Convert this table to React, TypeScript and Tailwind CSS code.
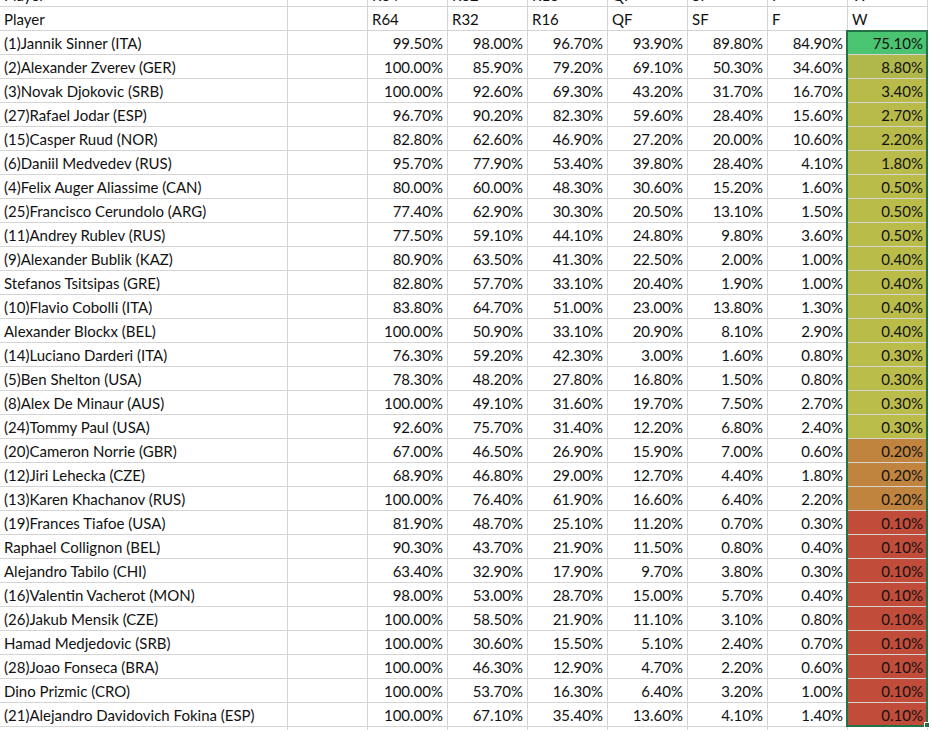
import React from "react";

type Row = [string, string[], string];

const data: Row[] = [
  ["(1)Jannik Sinner (ITA)", ["99.50%", "98.00%", "96.70%", "93.90%", "89.80%", "84.90%", "75.10%"], "bg-[#4bc472] border-[#4bc472]"],
  ["(2)Alexander Zverev (GER)", ["100.00%", "85.90%", "79.20%", "69.10%", "50.30%", "34.60%", "8.80%"], "bg-[#b0b84b] border-[#b0b84b]"],
  ["(3)Novak Djokovic (SRB)", ["100.00%", "92.60%", "69.30%", "43.20%", "31.70%", "16.70%", "3.40%"], "bg-[#b8bb4a] border-[#b8bb4a]"],
  ["(27)Rafael Jodar (ESP)", ["96.70%", "90.20%", "82.30%", "59.60%", "28.40%", "15.60%", "2.70%"], "bg-[#b8bb4a] border-[#b8bb4a]"],
  ["(15)Casper Ruud (NOR)", ["82.80%", "62.60%", "46.90%", "27.20%", "20.00%", "10.60%", "2.20%"], "bg-[#b8bb4a] border-[#b8bb4a]"],
  ["(6)Daniil Medvedev (RUS)", ["95.70%", "77.90%", "53.40%", "39.80%", "28.40%", "4.10%", "1.80%"], "bg-[#b9bc4a] border-[#b9bc4a]"],
  ["(4)Felix Auger Aliassime (CAN)", ["80.00%", "60.00%", "48.30%", "30.60%", "15.20%", "1.60%", "0.50%"], "bg-[#babc4a] border-[#babc4a]"],
  ["(25)Francisco Cerundolo (ARG)", ["77.40%", "62.90%", "30.30%", "20.50%", "13.10%", "1.50%", "0.50%"], "bg-[#babc4a] border-[#babc4a]"],
  ["(11)Andrey Rublev (RUS)", ["77.50%", "59.10%", "44.10%", "24.80%", "9.80%", "3.60%", "0.50%"], "bg-[#babc4a] border-[#babc4a]"],
  ["(9)Alexander Bublik (KAZ)", ["80.90%", "63.50%", "41.30%", "22.50%", "2.00%", "1.00%", "0.40%"], "bg-[#babc4a] border-[#babc4a]"],
  ["Stefanos Tsitsipas (GRE)", ["82.80%", "57.70%", "33.10%", "20.40%", "1.90%", "1.00%", "0.40%"], "bg-[#babc4a] border-[#babc4a]"],
  ["(10)Flavio Cobolli (ITA)", ["83.80%", "64.70%", "51.00%", "23.00%", "13.80%", "1.30%", "0.40%"], "bg-[#babc4a] border-[#babc4a]"],
  ["Alexander Blockx (BEL)", ["100.00%", "50.90%", "33.10%", "20.90%", "8.10%", "2.90%", "0.40%"], "bg-[#babc4a] border-[#babc4a]"],
  ["(14)Luciano Darderi (ITA)", ["76.30%", "59.20%", "42.30%", "3.00%", "1.60%", "0.80%", "0.30%"], "bg-[#bbbd4a] border-[#bbbd4a]"],
  ["(5)Ben Shelton (USA)", ["78.30%", "48.20%", "27.80%", "16.80%", "1.50%", "0.80%", "0.30%"], "bg-[#bbbd4a] border-[#bbbd4a]"],
  ["(8)Alex De Minaur (AUS)", ["100.00%", "49.10%", "31.60%", "19.70%", "7.50%", "2.70%", "0.30%"], "bg-[#bbbd4a] border-[#bbbd4a]"],
  ["(24)Tommy Paul (USA)", ["92.60%", "75.70%", "31.40%", "12.20%", "6.80%", "2.40%", "0.30%"], "bg-[#bbbd4a] border-[#bbbd4a]"],
  ["(20)Cameron Norrie (GBR)", ["67.00%", "46.50%", "26.90%", "15.90%", "7.00%", "0.60%", "0.20%"], "bg-[#c0843f] border-[#c0843f]"],
  ["(12)Jiri Lehecka (CZE)", ["68.90%", "46.80%", "29.00%", "12.70%", "4.40%", "1.80%", "0.20%"], "bg-[#c0843f] border-[#c0843f]"],
  ["(13)Karen Khachanov (RUS)", ["100.00%", "76.40%", "61.90%", "16.60%", "6.40%", "2.20%", "0.20%"], "bg-[#c0843f] border-[#c0843f]"],
  ["(19)Frances Tiafoe (USA)", ["81.90%", "48.70%", "25.10%", "11.20%", "0.70%", "0.30%", "0.10%"], "bg-[#c14c3a] border-[#c14c3a]"],
  ["Raphael Collignon (BEL)", ["90.30%", "43.70%", "21.90%", "11.50%", "0.80%", "0.40%", "0.10%"], "bg-[#c14c3a] border-[#c14c3a]"],
  ["Alejandro Tabilo (CHI)", ["63.40%", "32.90%", "17.90%", "9.70%", "3.80%", "0.30%", "0.10%"], "bg-[#c14c3a] border-[#c14c3a]"],
  ["(16)Valentin Vacherot (MON)", ["98.00%", "53.00%", "28.70%", "15.00%", "5.70%", "0.40%", "0.10%"], "bg-[#c14c3a] border-[#c14c3a]"],
  ["(26)Jakub Mensik (CZE)", ["100.00%", "58.50%", "21.90%", "11.10%", "3.10%", "0.80%", "0.10%"], "bg-[#c14c3a] border-[#c14c3a]"],
  ["Hamad Medjedovic (SRB)", ["100.00%", "30.60%", "15.50%", "5.10%", "2.40%", "0.70%", "0.10%"], "bg-[#c14c3a] border-[#c14c3a]"],
  ["(28)Joao Fonseca (BRA)", ["100.00%", "46.30%", "12.90%", "4.70%", "2.20%", "0.60%", "0.10%"], "bg-[#c14c3a] border-[#c14c3a]"],
  ["Dino Prizmic (CRO)", ["100.00%", "53.70%", "16.30%", "6.40%", "3.20%", "1.00%", "0.10%"], "bg-[#c14c3a] border-[#c14c3a]"],
  ["(21)Alejandro Davidovich Fokina (ESP)", ["100.00%", "67.10%", "35.40%", "13.60%", "4.10%", "1.40%", "0.10%"], "bg-[#c14c3a] border-[#c14c3a]"],
];

const heads = ["R64", "R32", "R16", "QF", "SF", "F", "W"];

const cell = "h-[24px] border-r border-b border-[#d4d4d4] px-[4px] pt-[1px] leading-[23px] whitespace-nowrap overflow-hidden";

function HeaderRow() {
  return (
    <div className="flex">
      <div className={`${cell} w-[288px]`}>Player</div>
      <div className={`${cell} w-[80px]`}></div>
      {heads.map((h) => (
        <div key={h} className={`${cell} w-[80px]`}>{h}</div>
      ))}
    </div>
  );
}

export default function App() {
  return (
    <div
      className="w-[932px] h-[730px] overflow-hidden bg-white text-[#111] text-[15px]"
      style={{ fontFamily: "Lato, 'Open Sans', sans-serif" }}
    >
      <div className="mt-[-17px]">
        <HeaderRow />
        <HeaderRow />
        <div className="relative">
          {data.map(([name, vals, color]) => (
            <div key={name} className="flex">
              <div className={`${cell} w-[288px]`}>{name}</div>
              <div className={`${cell} w-[80px]`}></div>
              {vals.map((v, i) => (
                <div
                  key={i}
                  className={`${cell} w-[80px] text-right ${i === 6 ? color : ""}`}
                >
                  {v}
                </div>
              ))}
            </div>
          ))}
          <div className="absolute left-[846px] top-[-1px] w-[82px] h-[697px] border-2 border-[#217346]" />
          <div className="absolute left-[924px] top-[691px] w-[6px] h-[6px] bg-[#217346] border border-white" />
        </div>
        <div className="flex">
          <div className={`${cell} w-[288px]`}></div>
          <div className={`${cell} w-[80px]`}></div>
          {heads.map((h) => (
            <div key={h} className={`${cell} w-[80px]`}></div>
          ))}
        </div>
      </div>
    </div>
  );
}
